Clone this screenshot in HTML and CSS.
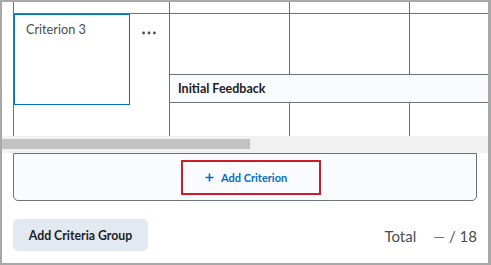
FILE: index.html
```html
<!DOCTYPE html>
<html>
<head>
<meta charset="utf-8">
<link rel="stylesheet" href="styles.css">
</head>
<body>
<div class="frame">
  <div class="scroller">
    <div class="rubric">
      <div class="cell top"></div>
      <div class="cell top"></div>
      <div class="cell top"></div>
      <div class="cell top"></div>

      <div class="cell criterion">
        <div class="crit-input">Criterion 3</div>
        <div class="crit-menu">
          <svg width="14" height="4" viewBox="0 0 14 4"><circle cx="1.6" cy="2" r="1.4"/><circle cx="7" cy="2" r="1.4"/><circle cx="12.4" cy="2" r="1.4"/></svg>
        </div>
      </div>
      <div class="cell level"></div>
      <div class="cell level"></div>
      <div class="cell level"></div>

      <div class="cell feedback">Initial Feedback</div>

      <div class="cell level"></div>
      <div class="cell level"></div>
      <div class="cell level"></div>
    </div>
  </div>
  <div class="hscroll"><div class="thumb"></div></div>
  <div class="add-box">
    <button class="add-btn">
      <svg class="plus" width="9" height="9" viewBox="0 0 9 9"><path d="M4.5 0.5v8M0.5 4.5h8"/></svg>
      <span>Add Criterion</span>
    </button>
  </div>
  <div class="footer">
    <button class="group-btn">Add Criteria Group</button>
    <div class="total">
      <span class="total-label">Total</span>
      <span class="score"><span class="dash">—</span> / 18</span>
    </div>
  </div>
</div>
</body>
</html>
```
FILE: styles.css
```css
* { box-sizing: border-box; }
html, body { margin: 0; padding: 0; background: #fff; }
body { font-family: Lato, "Open Sans", sans-serif; color: #494c4e; }

.frame {
  width: 491px;
  height: 265px;
  border: 2px solid #a8a8a8;
  border-right-width: 3px;
  background: #fff;
  display: flex;
  flex-direction: column;
  overflow: hidden;
}

.scroller {
  height: 134px;
  overflow: hidden;
  padding-left: 11px;
  flex: none;
}

.rubric {
  display: grid;
  width: max-content;
  grid-template-columns: 156px 120px 120px 120px;
  grid-template-rows: 11px 61px 28px 40px;
}

.cell {
  border-left: 1px solid #6e7376;
}
.level, .criterion, .feedback { border-top: 1px solid #6e7376; }

.criterion {
  grid-column: 1;
  grid-row: 2 / span 3;
  display: flex;
  align-items: flex-start;
}
.crit-input {
  width: 116px;
  height: 91px;
  border: 1px solid #006fbf;
  padding: 5px 11px;
  font-size: 12.7px;
  line-height: 18px;
  color: #494c4e;
}
.crit-menu {
  flex: 1;
  display: flex;
  justify-content: center;
  padding-top: 17px;
  padding-right: 1px;
}
.crit-menu svg { fill: #494c4e; display: block; }

.feedback {
  grid-column: 2 / span 3;
  grid-row: 3;
  background: #f9fbff;
  font-size: 12.5px;
  font-weight: 700;
  color: #202122;
  padding-left: 8px;
  display: flex;
  align-items: center;
}

.hscroll {
  height: 17px;
  background: #f1f1f1;
  padding-top: 3px;
  flex: none;
}
.thumb {
  width: 248px;
  height: 10px;
  background: #c1c1c1;
}

.add-box {
  margin: 0 11px;
  height: 48px;
  border: 1px solid #6e7376;
  border-radius: 0 0 5px 5px;
  background: #f9fbff;
  padding: 6px 0 0 167px;
  flex: none;
}
.add-btn {
  width: 140px;
  height: 35px;
  border: 2px solid #cd1d27;
  background: transparent;
  padding: 0 0 0 22px;
  margin: 0;
  display: flex;
  align-items: center;
  gap: 7px;
  font-family: Lato, "Open Sans", sans-serif;
  font-size: 11px;
  font-weight: 700;
  color: #006fbf;
}
.plus { display: block; stroke: #006fbf; stroke-width: 1.6; fill: none; }

.footer {
  margin-top: 18px;
  padding: 0 11px;
  display: flex;
  align-items: center;
  justify-content: space-between;
  flex: none;
}
.group-btn {
  width: 135px;
  height: 32px;
  border: none;
  border-radius: 5px;
  background: #e3e9f1;
  font-family: Lato, "Open Sans", sans-serif;
  font-size: 12.3px;
  font-weight: 700;
  color: #202122;
  padding: 0;
}
.total {
  display: flex;
  gap: 17px;
  font-size: 15px;
  color: #494c4e;
  padding-top: 1px;
}
.dash { color: #6e7376; }
```
